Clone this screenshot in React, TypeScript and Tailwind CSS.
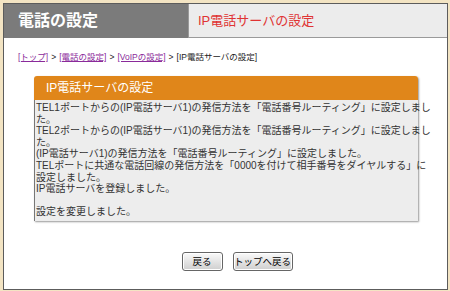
import React from 'react';

const font = { fontFamily: '"Liberation Sans", "Noto Sans CJK JP", sans-serif' };

const lines = [
  'TEL1ポートからの(IP電話サーバ1)の発信方法を「電話番号ルーティング」に設定しまし',
  'た。',
  'TEL2ポートからの(IP電話サーバ1)の発信方法を「電話番号ルーティング」に設定しまし',
  'た。',
  '(IP電話サーバ1)の発信方法を「電話番号ルーティング」に設定しました。',
  'TELポートに共通な電話回線の発信方法を「0000を付けて相手番号をダイヤルする」に',
  '設定しました。',
  'IP電話サーバを登録しました。',
  '\u00a0',
  '設定を変更しました。',
];

const Btn = ({ label, w }: { label: string; w: string }) => (
  <button
    className={`${w} h-[19px] px-0 whitespace-nowrap rounded-[3px] border border-[#666] bg-gradient-to-b from-[#fafafa] to-[#cfcfcf] text-[9.5px] leading-none text-black shadow-[inset_0_0_0_1px_#fff]`}
  >
    {label}
  </button>
);

export default function App() {
  return (
    <div className="w-[450px] h-[291px] bg-[#f3e4c3] pt-[3px] pl-[3px] pr-[2px] pb-[1px]" style={font}>
      <div className="w-[445px] h-[287px] border border-[#5c5c5c] bg-white flex flex-col">
        <div className="flex h-[34px]">
          <div className="w-[184px] bg-[#7b7b7b] flex items-center pl-[14px] text-white font-bold text-[16px]">
            電話の設定
          </div>
          <div className="flex-1 bg-[#ececec] border-l border-b border-[#9a9a9a] flex items-center pl-[9px] text-[#e03333] text-[13px]">
            IP電話サーバの設定
          </div>
        </div>
        <div className="pl-[14px] pt-[14px] text-[8.5px] leading-[11px] text-[#222] flex gap-[3px] whitespace-nowrap">
          <a className="text-[#8a2a9a] underline">[トップ]</a>
          <span>&gt;</span>
          <a className="text-[#8a2a9a] underline">[電話の設定]</a>
          <span>&gt;</span>
          <a className="text-[#8a2a9a] underline">[VoIPの設定]</a>
          <span>&gt;</span>
          <span>[IP電話サーバの設定]</span>
        </div>
        <div className="ml-[30px] mt-[13px] w-[384px] rounded-t-[3px] shadow-[1px_1px_2px_#999]">
          <div className="h-[24px] bg-[#e0861a] rounded-t-[3px] flex items-center pl-[12px] text-white text-[12px]">
            IP電話サーバの設定
          </div>
          <div className="bg-[#ededed] border-l border-[#777] pl-[1px] pt-[2px] pb-[3px] text-[10px] leading-[11.6px] text-[#333] whitespace-nowrap">
            {lines.map((l, i) => (
              <div key={i}>{l}</div>
            ))}
          </div>
        </div>
        <div className="flex justify-center gap-[10px] mt-[31px] pl-[23px]">
          <Btn label="戻る" w="w-[41px]" />
          <Btn label="トップへ戻る" w="w-[60px]" />
        </div>
      </div>
    </div>
  );
}
